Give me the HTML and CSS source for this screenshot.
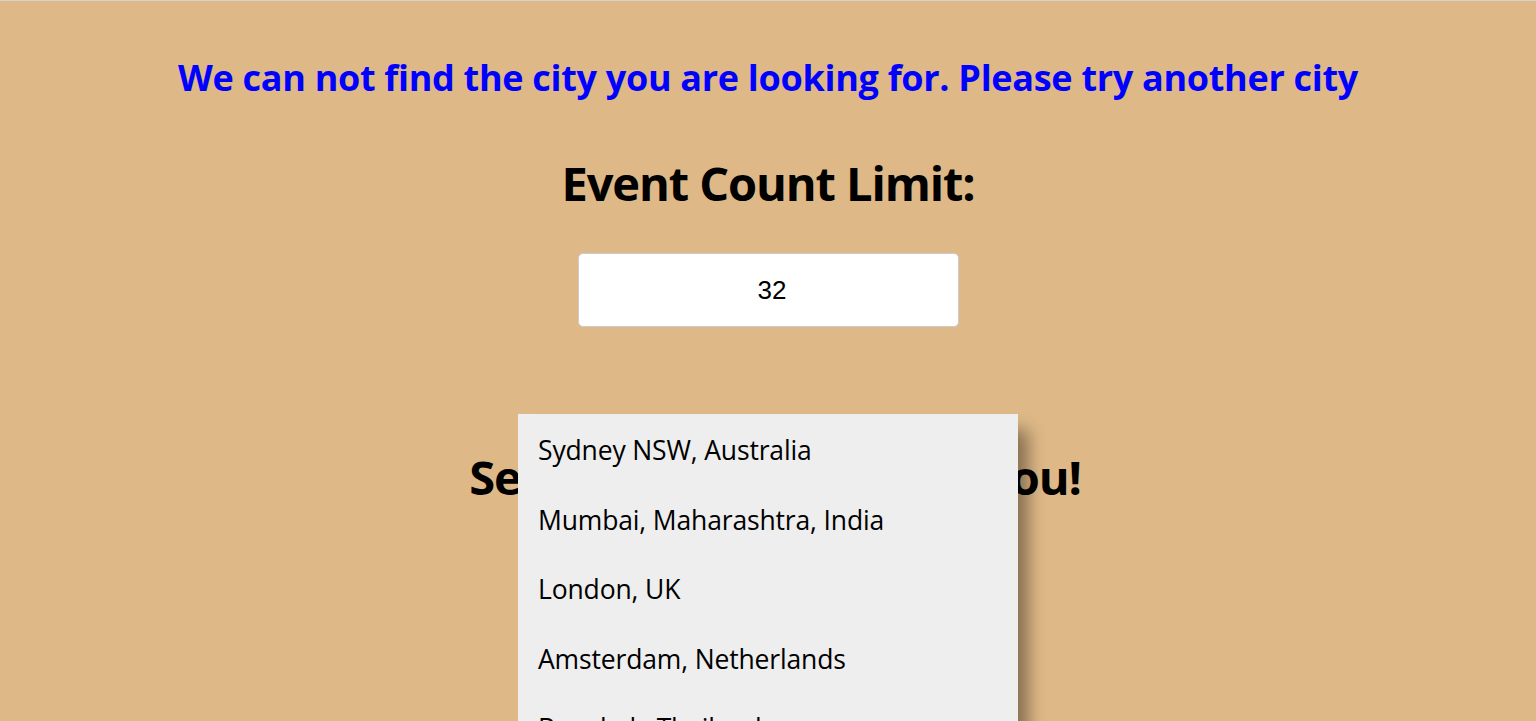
FILE: index.html
```html
<!DOCTYPE html>
<html>
<head>
<meta charset="utf-8">
<link rel="stylesheet" href="styles.css">
</head>
<body>
<div class="app">
  <h2 class="error">We can not find the city you are looking for. Please try another city</h2>
  <h1 class="label">Event Count Limit:</h1>
  <input class="count" type="text" value="32">
  <div class="search">
    <h1 class="search-title">Search for events near you!</h1>
    <ul class="suggestions">
      <li>Sydney NSW, Australia</li>
      <li>Mumbai, Maharashtra, India</li>
      <li>London, UK</li>
      <li>Amsterdam, Netherlands</li>
      <li>Bangkok, Thailand</li>
    </ul>
  </div>
</div>
</body>
</html>
```

FILE: styles.css
```css
html, body {
  margin: 0;
  padding: 0;
  height: 100%;
  overflow: hidden;
}
body {
  background: #deb887;
  border-top: 1px solid #d3d3d3;
  font-family: "Open Sans", "Noto Sans", sans-serif;
  color: #000;
}
.app {
  display: flex;
  flex-direction: column;
  align-items: center;
}
.error {
  margin: 55px 0 0;
  font-size: 36px;
  line-height: 44px;
  font-weight: 700;
  color: #0000ff;
  letter-spacing: -0.3px;
}
.label {
  margin: 55px 0 0;
  font-size: 47px;
  line-height: 56px;
  font-weight: 700;
  letter-spacing: -1.1px;
}
.count {
  margin-top: 42px;
  box-sizing: border-box;
  width: 381px;
  height: 74px;
  border: 1px solid #ccc;
  border-radius: 5px;
  background: #fff;
  text-align: center;
  font-family: "Liberation Sans", Arial, sans-serif;
  font-size: 26px;
  color: #000;
  padding: 0 0 0 8px;
}
.search {
  position: relative;
  width: 100%;
  display: flex;
  flex-direction: column;
  align-items: center;
}
.search-title {
  margin: 122px 0 0;
  padding-left: 14px;
  font-size: 47px;
  line-height: 56px;
  font-weight: 700;
  letter-spacing: -1.1px;
}
.suggestions {
  position: absolute;
  top: 87px;
  left: 518px;
  width: 500px;
  margin: 0;
  padding: 0;
  list-style: none;
  background: #eeeeee;
  box-shadow: 14px 12px 16px -4px rgba(0, 0, 0, 0.4);
}
.suggestions li {
  padding: 0 20px;
  height: 69.5px;
  line-height: 72px;
  font-size: 26.5px;
  letter-spacing: -0.15px;
}
```
